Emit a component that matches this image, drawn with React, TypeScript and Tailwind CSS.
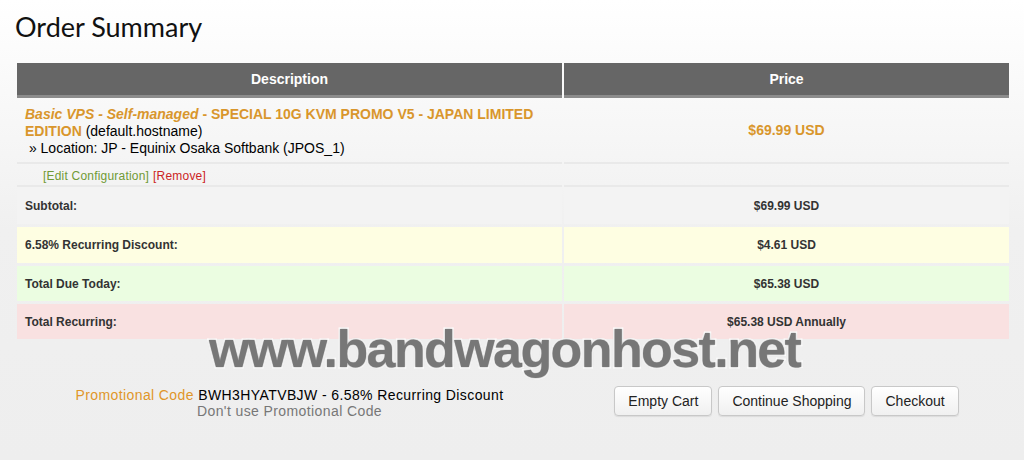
import React from "react";

const sans = "font-['Liberation_Sans',Arial,sans-serif]";

function Row({
  label,
  value,
  bg,
  h = "h-[36px]",
}: {
  label: string;
  value: string;
  bg: string;
  h?: string;
}) {
  return (
    <>
      <div className={`${bg} ${h} flex items-center pl-[8px] text-[12px] font-bold text-[#333]`}>{label}</div>
      <div className={`${bg} ${h} flex items-center justify-center text-[12px] font-bold text-[#333]`}>{value}</div>
    </>
  );
}

export default function App() {
  return (
    <div
      className={`relative w-[1024px] h-[460px] overflow-hidden bg-[linear-gradient(to_bottom,#ffffff_0px,#f0f0f0_230px,#eeeeee_460px)] ${sans}`}
    >
      <h1 className="pl-[15px] pt-[8px] h-[63px] font-['Lato',sans-serif] text-[27px] leading-[38px] text-[#111] font-normal">
        Order Summary
      </h1>

      <div className="ml-[17px] w-[992px] grid grid-cols-[545px_445px] gap-x-[2px]">
        {/* header */}
        <div className="h-[35px] bg-[#666666] border-b-[3px] border-[#8c8c8c] flex items-center justify-center text-white font-bold text-[14px]">
          Description
        </div>
        <div className="h-[35px] bg-[#666666] border-b-[3px] border-[#8c8c8c] flex items-center justify-center text-white font-bold text-[14px]">
          Price
        </div>

        {/* product row */}
        <div className="h-[66px] border-b-[2px] border-[#e9e9e9] pl-[8px] pt-[8px] text-[14px] leading-[17px] text-black">
          <span className="font-bold text-[#d9962c]">
            <i>Basic VPS - Self-managed</i> - SPECIAL 10G KVM PROMO V5 - JAPAN LIMITED EDITION
          </span>{" "}
          (default.hostname)
          <br />
          &nbsp;» Location: JP - Equinix Osaka Softbank (JPOS_1)
        </div>
        <div className="h-[66px] border-b-[2px] border-[#e9e9e9] flex items-center justify-center font-bold text-[14px] text-[#d9962c]">
          $69.99 USD
        </div>

        {/* edit row */}
        <div className="h-[23px] border-b-[2px] border-[#e9e9e9] pl-[26px] pt-[2px] flex items-center text-[12px] tracking-[0.2px]">
          <span className="text-[#709a35]">[Edit Configuration]</span>
          <span className="ml-[4px] text-[#cc2424]">[Remove]</span>
        </div>
        <div className="h-[23px] border-b-[2px] border-[#e9e9e9]" />

        <Row label="Subtotal:" value="$69.99 USD" bg="bg-[#f3f3f3]" h="h-[37px]" />
        <div className="col-span-2 h-[3px]" />
        <Row label="6.58% Recurring Discount:" value="$4.61 USD" bg="bg-[#fefee2]" />
        <div className="col-span-2 h-[3px]" />
        <Row label="Total Due Today:" value="$65.38 USD" bg="bg-[#ebfde1]" h="h-[35px]" />
        <div className="col-span-2 h-[3px]" />
        <Row label="Total Recurring:" value="$65.38 USD Annually" bg="bg-[#f9e1e1]" h="h-[35px]" />

        {/* bottom */}
        <div className="pt-[48px] flex flex-col items-center text-[14px] leading-[16px] tracking-[0.4px]">
          <div>
            <span className="text-[#e0962a]">Promotional Code</span>{" "}
            <span className="text-black">BWH3HYATVBJW - 6.58% Recurring Discount</span>
          </div>
          <div className="text-[#777]">Don&apos;t use Promotional Code</div>
        </div>
        <div className="pt-[47px] flex justify-center gap-[6px]">
          {["Empty Cart", "Continue Shopping", "Checkout"].map((b) => (
            <button
              key={b}
              className="h-[30px] px-[13px] rounded-[4px] border border-[#c8c8c8] bg-[linear-gradient(to_bottom,#ffffff,#f0f0f0)] shadow-[0_1px_1px_rgba(0,0,0,0.08)] text-[14px] text-[#222]"
            >
              {b}
            </button>
          ))}
        </div>
      </div>

      {/* watermark */}
      <div className="absolute left-[209px] top-[317px] text-[52px] leading-[64px] font-bold tracking-[-1.6px] text-[#777777] [-webkit-text-stroke:3px_#ffffff] [paint-order:stroke_fill] [text-shadow:0_0_2px_#9a9a9a] pointer-events-none">
        www.bandwagonhost.net
      </div>
    </div>
  );
}
